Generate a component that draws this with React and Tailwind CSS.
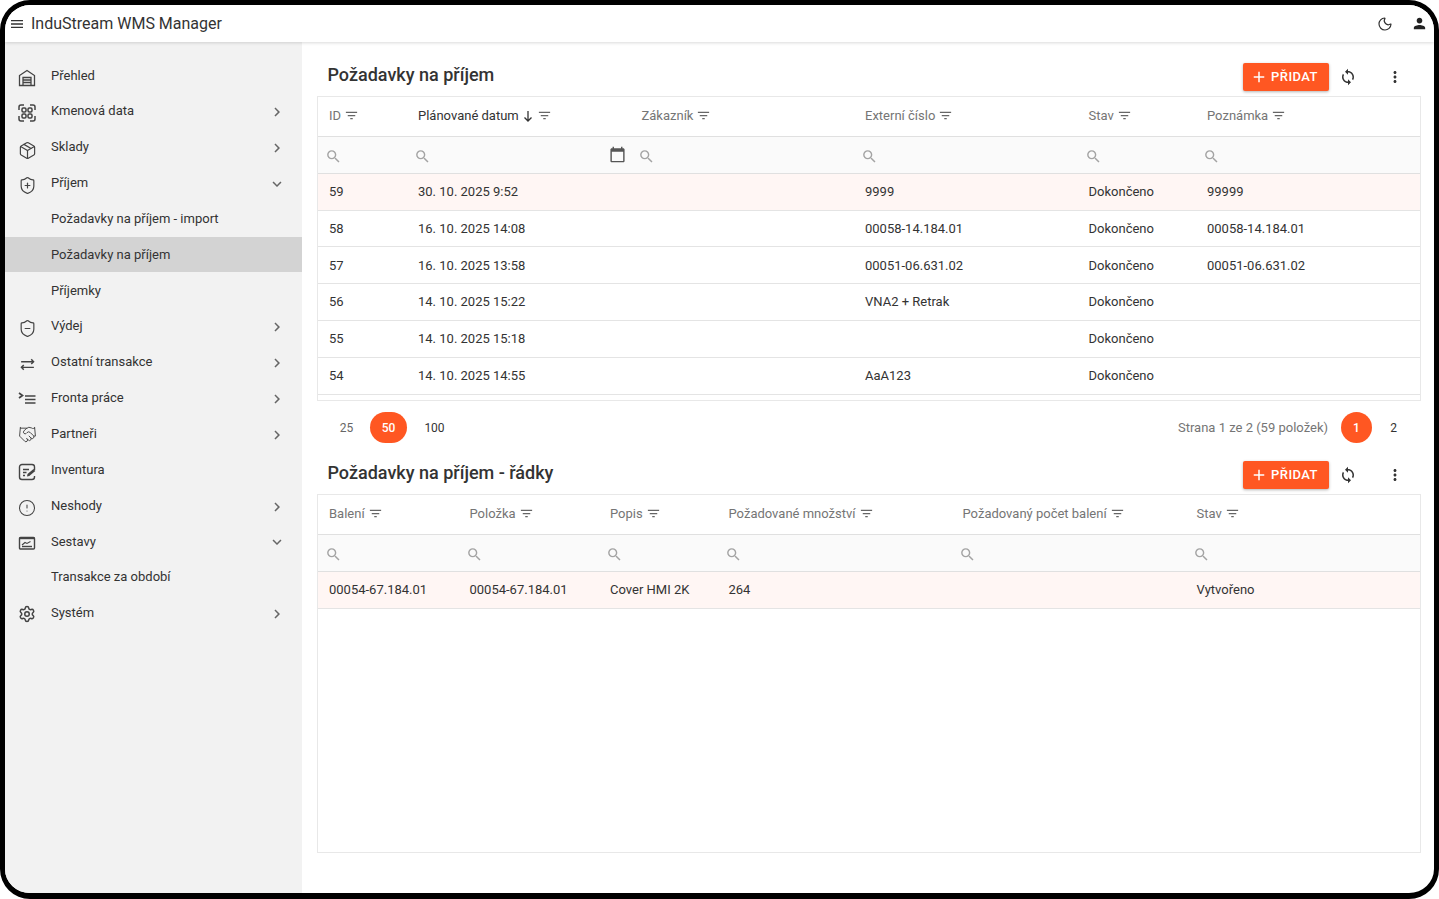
import {
  MdMenu,
  MdOutlineSyncAlt,
  MdPerson,
  MdSync,
  MdMoreVert,
  MdAdd,
  MdFilterList,
  MdSearch,
  MdCalendarToday,
  MdChevronRight,
  MdExpandMore,
} from "react-icons/md";
import { Moon, Package, ShieldPlus, ShieldMinus, Handshake, CircleAlert, Settings } from "lucide-react";

function WarehouseIcon() {
  return (
    <svg width="20" height="20" viewBox="0 0 20 20" fill="none" stroke="currentColor" strokeWidth="1.3">
      <path d="M2.5 17.5V7.5L10 2.5l7.5 5v10z" />
      <path d="M6 17.5V9.5h8v8M6 12h8M6 14.5h8" />
    </svg>
  );
}

function QrIcon() {
  return (
    <svg width="20" height="20" viewBox="0 0 20 20" fill="none" stroke="currentColor" strokeWidth="1.5">
      <path d="M2 7V4a2 2 0 0 1 2-2h3M13 2h3a2 2 0 0 1 2 2v3M18 13v3a2 2 0 0 1-2 2h-3M7 18H4a2 2 0 0 1-2-2v-3" />
      <rect x="5" y="5" width="4" height="4" rx="1.2" />
      <rect x="11" y="5" width="4" height="4" rx="1.2" />
      <rect x="5" y="11" width="4" height="4" rx="1.2" />
      <rect x="11" y="11" width="4" height="4" rx="1.2" />
    </svg>
  );
}

function QueueIcon() {
  return (
    <svg width="20" height="20" viewBox="0 0 20 20" fill="none" stroke="currentColor" strokeWidth="1.7">
      <path d="M2 5l3.5 2.5L2 10" />
      <path d="M8 8h10.5M8 11.5h10.5M8 15h10.5" />
    </svg>
  );
}

function InventoryIcon() {
  return (
    <svg width="20" height="20" viewBox="0 0 20 20" fill="none" stroke="currentColor" strokeWidth="1.4">
      <path d="M17.5 8V5a2.5 2.5 0 0 0-2.5-2.5H5A2.5 2.5 0 0 0 2.5 5v10A2.5 2.5 0 0 0 5 17.5h10a2.5 2.5 0 0 0 2.5-2.5v-1" />
      <path d="M6 7.5h6M6 10.5h3.5M6 13.5h2" />
      <path d="M10 14.5l.5-2.5 6-5 1.8 2-6 5z" fill="currentColor" stroke="none" />
    </svg>
  );
}

function ReportIcon() {
  return (
    <svg width="20" height="20" viewBox="0 0 20 20" fill="none" stroke="currentColor" strokeWidth="1.4">
      <rect x="2.5" y="4.5" width="15" height="11.5" rx="1" />
      <path d="M2.5 5.2h15" strokeWidth="2" />
      <path d="M5 13.5h10" />
      <path d="M5 12l3-2.5 2 1 3.5-2" strokeWidth="1.1" />
    </svg>
  );
}

const menu = [
  { label: "Přehled", icon: <WarehouseIcon />, iconTop: "top-[11px]" },
  { label: "Kmenová data", icon: <QrIcon />, arrow: "right", iconTop: "top-[10px]" },
  { label: "Sklady", icon: <Package size={19} strokeWidth={1.5} />, arrow: "right", iconTop: "top-[11px]" },
  { label: "Příjem", icon: <ShieldPlus size={19} strokeWidth={1.5} />, arrow: "down", iconTop: "top-[11px]" },
  { label: "Požadavky na příjem - import" },
  { label: "Požadavky na příjem", active: true },
  { label: "Příjemky" },
  { label: "Výdej", icon: <ShieldMinus size={19} strokeWidth={1.5} />, arrow: "right", iconTop: "top-[10px]" },
  { label: "Ostatní transakce", icon: <MdOutlineSyncAlt size={17} />, arrow: "right", iconTop: "top-[10px]" },
  { label: "Fronta práce", icon: <QueueIcon />, arrow: "right", iconTop: "top-[8px]" },
  { label: "Partneři", icon: <Handshake size={19} strokeWidth={1.2} />, arrow: "right", iconTop: "top-[9px]" },
  { label: "Inventura", icon: <InventoryIcon />, iconTop: "top-[10px]" },
  { label: "Neshody", icon: <CircleAlert size={18} strokeWidth={1.4} />, arrow: "right", iconTop: "top-[10px]" },
  { label: "Sestavy", icon: <ReportIcon />, arrow: "down", iconTop: "top-[10px]" },
  { label: "Transakce za období" },
  { label: "Systém", icon: <Settings size={18} strokeWidth={2} />, arrow: "right", iconTop: "top-[9px]" },
];

const orders = [
  ["59", "30. 10. 2025 9:52", "", "9999", "Dokončeno", "99999"],
  ["58", "16. 10. 2025 14:08", "", "00058-14.184.01", "Dokončeno", "00058-14.184.01"],
  ["57", "16. 10. 2025 13:58", "", "00051-06.631.02", "Dokončeno", "00051-06.631.02"],
  ["56", "14. 10. 2025 15:22", "", "VNA2 + Retrak", "Dokončeno", ""],
  ["55", "14. 10. 2025 15:18", "", "", "Dokončeno", ""],
  ["54", "14. 10. 2025 14:55", "", "AaA123", "Dokončeno", ""],
];

const orderLines = [["00054-67.184.01", "00054-67.184.01", "Cover HMI 2K", "264", "", "Vytvořeno"]];

function Toolbar({ title }) {
  return (
    <div className="flex h-10 shrink-0 items-center pl-[10.5px] pr-[16px]">
      <h2 className="mb-[4px] text-[18px] font-medium text-[#333333]">{title}</h2>
      <button className="ml-auto mt-[2px] flex h-7 w-[86px] items-center justify-center gap-[3px] rounded-[2px] bg-[#ff5722] pr-[4px] text-[13px] font-medium tracking-[0.45px] text-white shadow-[0_1px_3px_rgba(0,0,0,0.3)]">
        <MdAdd size={18} />
        PŘIDAT
      </button>
      <span className="ml-[9px] mt-[2px] flex w-[20px] justify-center text-[#333333]">
        <MdSync size={18} />
      </span>
      <span className="ml-[27px] mt-[2px] flex w-[20px] justify-center text-[#333333]">
        <MdMoreVert size={18} />
      </span>
    </div>
  );
}

function DataGrid({ columns, template, rows, className }) {
  return (
    <div className={`border border-[#e8e8e8] ${className}`}>
      <div className={`grid h-10 items-center border-b border-[#e0e0e0] pb-[2px] ${template}`}>
        {columns.map((col) => (
          <div key={col.name} className={`flex items-center pl-[11px] text-[13px] ${col.sorted ? "text-[#333333]" : "text-[#757575]"}`}>
            {col.name}
            {col.sorted && (
              <svg width="10" height="14" viewBox="0 0 10 14" fill="none" stroke="currentColor" strokeWidth="1.3" className="ml-[4px]">
                <path d="M5 2v10M1.5 8.5L5 12l3.5-3.5" />
              </svg>
            )}
            <MdFilterList size={15} className={`${col.sorted ? "ml-[4px]" : "ml-[3px]"} text-[#666666]`} />
          </div>
        ))}
      </div>
      <div className={`grid h-[36.8px] items-center border-b border-[#e0e0e0] bg-[#fafafa] pt-[3px] ${template}`}>
        {columns.map((col) => (
          <div key={col.name} className="flex items-center pl-[7px] pr-[5px] text-[#a3a3a3]">
            <MdSearch size={17} />
            {col.date && <MdCalendarToday size={17} className="mb-[3px] ml-auto text-[#555555]" />}
          </div>
        ))}
      </div>
      {rows.map((row, i) => (
        <div key={i} className={`grid h-[36.8px] items-center border-b border-[#e4e4e4] text-[13px] text-[#333333] ${template} ${i === 0 ? "bg-[#fff6f4]" : ""}`}>
          {row.map((cell, j) => (
            <div key={j} className="pl-[11px]">
              {cell}
            </div>
          ))}
        </div>
      ))}
    </div>
  );
}

export default function App() {
  return (
    <div className="h-[899px] w-[1439px] bg-white" style={{ fontFamily: "Roboto, sans-serif" }}>
      <div className="flex h-full w-full flex-col overflow-hidden rounded-[30px] border-x-[5px] border-t-[5px] border-b-[6px] border-black bg-white">
        <header className="relative z-10 flex h-[37px] shrink-0 items-center bg-white pl-[4px] pr-[6px] shadow-[0_1px_3px_rgba(0,0,0,0.15)]">
          <MdMenu size={16} className="text-[#333333]" />
          <span className="ml-[6px] text-[16px] text-[#333333]">InduStream WMS Manager</span>
          <Moon size={16} strokeWidth={1.8} className="ml-auto text-[#333333]" />
          <MdPerson size={17} className="ml-[18px] text-[#222222]" />
        </header>
        <div className="flex min-h-0 flex-1">
          <aside className="w-[297px] shrink-0 bg-[#f2f2f2] pt-[15.4px]">
            {menu.map((item) => (
              <div key={item.label} className={`relative flex h-[35.85px] items-center pl-[46px] text-[13px] text-[#333333] ${item.active ? "bg-[#d3d3d3]" : ""}`}>
                {item.icon && (
                  <span className={`absolute left-[12px] flex h-5 w-5 items-center justify-center text-[#444444] ${item.iconTop}`}>{item.icon}</span>
                )}
                {item.label}
                {item.arrow === "right" && <MdChevronRight size={18} className="absolute left-[263px] top-[10px] text-[#666666]" />}
                {item.arrow === "down" && <MdExpandMore size={18} className="absolute left-[263px] top-[10px] text-[#666666]" />}
              </div>
            ))}
          </aside>
          <main className="flex min-w-0 flex-1 flex-col pb-10 pl-[15px] pr-[13px] pt-[14px]">
            <Toolbar title="Požadavky na příjem" />
            <DataGrid
              className="h-[305px] shrink-0"
              template="grid-cols-[89px_223.5px_223.5px_223.5px_118.5px_1fr]"
              columns={[
                { name: "ID" },
                { name: "Plánované datum", sorted: true, date: true },
                { name: "Zákazník" },
                { name: "Externí číslo" },
                { name: "Stav" },
                { name: "Poznámka" },
              ]}
              rows={orders}
            />
            <div className="flex h-[53px] shrink-0 items-center pl-[11px] pr-[12px] text-[12px]">
              <span className="w-[37px] text-center text-[#666666]">25</span>
              <span className="ml-[5px] flex h-[31px] w-[37px] items-center justify-center rounded-full bg-[#ff5722] font-medium text-white">50</span>
              <span className="ml-[9px] w-[37px] text-center text-[#333333]">100</span>
              <span className="ml-auto text-[13px] text-[#757575]">Strana 1 ze 2 (59 položek)</span>
              <span className="ml-[13px] flex h-[31px] w-[31px] items-center justify-center rounded-full bg-[#ff5722] font-medium text-white">1</span>
              <span className="ml-[6px] w-[31px] text-center text-[#333333]">2</span>
            </div>
            <Toolbar title="Požadavky na příjem - řádky" />
            <DataGrid
              className="min-h-0 flex-1"
              template="grid-cols-[140.5px_140.5px_118.5px_234px_234px_1fr]"
              columns={[
                { name: "Balení" },
                { name: "Položka" },
                { name: "Popis" },
                { name: "Požadované množství" },
                { name: "Požadovaný počet balení" },
                { name: "Stav" },
              ]}
              rows={orderLines}
            />
          </main>
        </div>
      </div>
    </div>
  );
}
